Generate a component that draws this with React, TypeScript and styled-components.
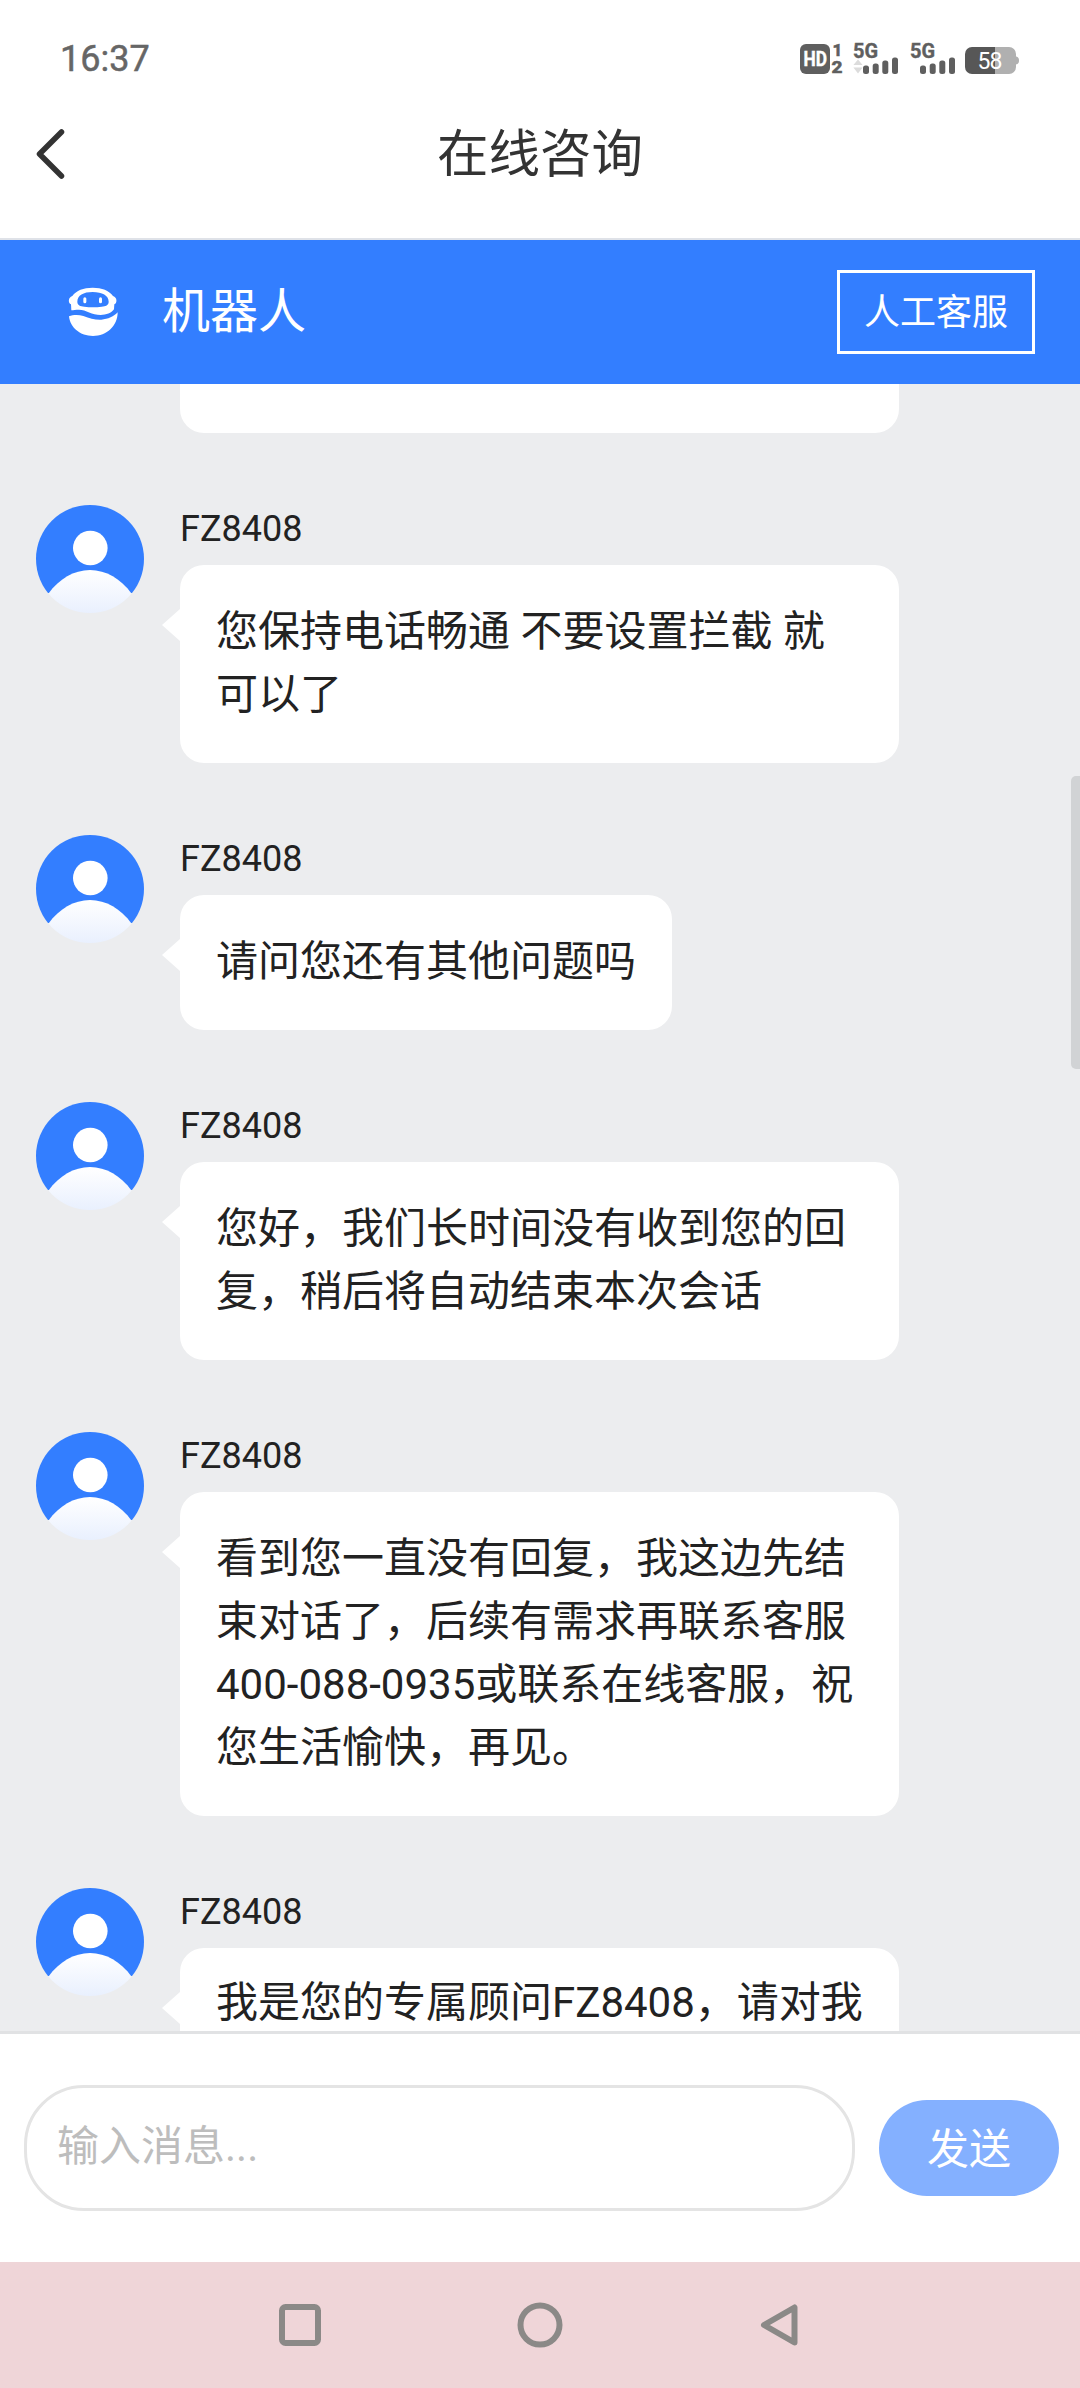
import React from "react";
import styled, { createGlobalStyle } from "styled-components";

const GlobalStyle = createGlobalStyle`
  *, *::before, *::after { box-sizing: border-box; }
  body {
    margin: 0;
    background: #fff;
    font-family: Roboto, "Noto Sans CJK SC", sans-serif;
    -webkit-font-smoothing: antialiased;
  }
`;

const Screen = styled.div`
  display: flex;
  flex-direction: column;
  width: 1080px;
  height: 2388px;
  overflow: hidden;
  background: #fff;
`;

const StatusBar = styled.div`
  display: flex;
  align-items: center;
  justify-content: space-between;
  height: 117px;
  padding: 0 59px 0 60px;
`;

const Clock = styled.span`
  color: #666;
  font-size: 36px;
  font-weight: 400;
  line-height: 42px;
  -webkit-text-stroke: 0.5px #666;
`;

const TitleBar = styled.header`
  display: grid;
  grid-template-columns: 120px 1fr 120px;
  align-items: center;
  height: 123px;
  border-bottom: 2px solid #dfe2e8;
`;

const BackButton = styled.button`
  display: flex;
  align-items: center;
  height: 72px;
  padding: 0 0 0 33px;
  margin-bottom: 48px;
  border: 0;
  background: none;
  align-self: end;
`;

const Title = styled.h1`
  margin: 0 0 47px;
  align-self: end;
  color: #333;
  font-size: 51.5px;
  font-weight: 400;
  line-height: 72px;
  text-align: center;
`;

const Banner = styled.div`
  display: flex;
  align-items: center;
  flex: none;
  height: 144px;
  padding: 0 45px 0 68px;
  background: #337eff;
  color: #fff;
`;

const BannerName = styled.span`
  flex: 1;
  margin-left: 44px;
  font-size: 48px;
  line-height: 72px;
`;

const AgentButton = styled.button`
  width: 198px;
  height: 84px;
  padding: 0 0 7px;
  border: 3px solid #fff;
  background: none;
  color: #fff;
  font-family: inherit;
  font-size: 36px;
`;

const Chat = styled.main`
  position: relative;
  display: flex;
  flex-direction: column;
  gap: 72px;
  flex: 1;
  min-height: 0;
  overflow: hidden;
  background: #ecedef;
`;

const ScrollThumb = styled.div`
  position: absolute;
  top: 392px;
  right: 0;
  width: 9px;
  height: 293px;
  border-radius: 5px 0 0 5px;
  background: #d1d3d5;
`;

const ClippedBubble = styled.div`
  flex: none;
  width: 719px;
  height: 49px;
  margin-left: 180px;
  border-radius: 0 0 24px 24px;
  background: #fff;
`;

const Row = styled.article`
  display: flex;
  flex: none;
  gap: 36px;
  padding-left: 36px;
`;

const Body = styled.div`
  display: flex;
  flex-direction: column;
  align-items: flex-start;
`;

const Sender = styled.div`
  height: 60px;
  color: #222;
  font-size: 36px;
  line-height: 48px;
`;

const Bubble = styled.div<{ $wide: boolean; $top: number }>`
  position: relative;
  width: ${(p) => (p.$wide ? "719px" : "auto")};
  padding: ${(p) => p.$top}px 36px 37px;
  border-radius: 24px;
  background: #fff;
  color: #222;
  font-size: 42px;
  line-height: 63px;
  white-space: pre;

  &::before {
    content: "";
    position: absolute;
    top: 44px;
    left: -18px;
    border: solid transparent;
    border-width: 16px 18px 16px 0;
    border-right-color: #fff;
  }
`;

const Composer = styled.footer`
  display: flex;
  align-items: center;
  flex: none;
  gap: 24px;
  height: 231px;
  padding: 0 21px 0 24px;
  border-top: 3px solid #e1e2e4;
`;

const MessageInput = styled.input`
  flex: 1;
  min-width: 0;
  height: 126px;
  padding: 0 30px 4px;
  border: 3px solid #e4e4e4;
  border-radius: 60px;
  background: #fff;
  font-family: inherit;
  font-size: 42px;
  outline: none;

  &::placeholder { color: #bdbdbd; opacity: 1; }
`;

const SendButton = styled.button`
  width: 180px;
  height: 96px;
  padding: 0 0 6px;
  border: 0;
  border-radius: 48px;
  background: #84b0ff;
  color: #fff;
  font-family: inherit;
  font-size: 42px;
`;

const SystemNav = styled.nav`
  display: flex;
  align-items: center;
  justify-content: center;
  flex: none;
  gap: 196px;
  height: 126px;
  background: #efd5d8;
`;

const StatusIcons = () => (
  <svg width="222" height="36" viewBox="800 41 222 36" fill="#5f5f5f" fontFamily="Roboto, sans-serif">
    <rect x="801" y="44" width="30" height="30" rx="6" />
    <text x="804.5" y="66" fontSize="19.5" fontWeight="700" fill="#fff" stroke="#fff" strokeWidth=".4" textLength="23.500" lengthAdjust="spacingAndGlyphs">HD</text>
    <text x="833.5" y="56" fontSize="17" fontWeight="800" stroke="#5f5f5f" strokeWidth=".5" textLength="9">1</text>
    <text x="832.5" y="73" fontSize="17" fontWeight="800" stroke="#5f5f5f" strokeWidth=".5" textLength="11" lengthAdjust="spacingAndGlyphs">2</text>
    {[0, 57].map((dx) => (
      <g key={dx} transform={`translate(${dx} 0)`}>
        <text x="854" y="58" fontSize="19.500" fontWeight="700" stroke="#5f5f5f" strokeWidth=".4" textLength="25" lengthAdjust="spacingAndGlyphs">5G</text>
        <rect x="864" y="65.5" width="6" height="8.5" rx="2.5" />
        <rect x="873.7" y="63.5" width="6" height="10.5" rx="2.5" />
        <rect x="883.3" y="60.5" width="6" height="13.5" rx="2.5" />
        <rect x="893" y="57.5" width="6" height="16.5" rx="2.5" />
      </g>
    ))}
    <path d="M859 59.500l4.600 5.500h-9.200zM859 73.500l4.600-6h-9.200z" fill="#dcdcdc" />
    <path d="M996 47h14a7 7 0 0 1 7 7v2.500c2.500.5 3 2 3 4s-.5 3.500-3 4v2.500a7 7 0 0 1-7 7h-14z" fill="#b0b0b0" />
    <path d="M996 47v27h-23a7 7 0 0 1-7-7v-13a7 7 0 0 1 7-7z" fill="#575757" />
    <text x="978.500" y="68.500" fontSize="23" fill="#fff" textLength="25">58</text>
  </svg>
);

const BackIcon = () => (
  <svg width="34" height="54" viewBox="0 0 34 54" fill="none" stroke="#333" strokeWidth="5.500" strokeLinecap="round" strokeLinejoin="round">
    <path d="M28.500 5 6.500 27l22 22" />
  </svg>
);

const RobotIcon = () => (
  <svg width="50" height="50" viewBox="204 172 150 150" fill="#fff">
    <path
      fillRule="evenodd"
      d="M214 242L213 224C204 220 204 203 217 199C229 182 250 174 278 174C306 174 327 182 339 199C352 203 352 220 343 224L342 239C334 250 319 256 302 256C276 256 258 240 237 240C227 240 220 241 214 242ZM232 216C232 197 250 187 278 187C307 187 326 198 326 216C326 226 317 230 305 231C288 233 270 233 253 231C241 230 232 226 232 216Z"
    />
    <rect x="250" y="203" width="9" height="18" rx="4.500" />
    <rect x="297" y="203" width="9" height="18" rx="4.500" />
    <path d="M207 260C219 255 235 254 250 259C269 266 286 271 304 270C324 269 342 260 353 248C353 289 320 319 279 319C241 319 210 294 207 260Z" />
  </svg>
);

const Avatar = () => (
  <svg width="108" height="108" viewBox="0 0 108 108">
    <defs>
      <clipPath id="avatar-clip"><circle cx="54" cy="54" r="54" /></clipPath>
      <linearGradient id="avatar-body" x1="0" y1="65" x2="0" y2="108" gradientUnits="userSpaceOnUse">
        <stop offset="0" stopColor="#fff" />
        <stop offset="1" stopColor="#e9f0fe" />
      </linearGradient>
    </defs>
    <g clipPath="url(#avatar-clip)">
      <path d="M0 0H108V88H0Z" fill="#337eff" />
      <path d="M0 108 12.500 88.500C23 74 38 65 54 65S85 74 95.500 88.500L108 108Z" fill="url(#avatar-body)" />
    </g>
    <circle cx="54.300" cy="43" r="17.300" fill="#fff" />
  </svg>
);

const SquareIcon = () => (
  <svg width="42" height="42" viewBox="0 0 42 42" fill="none" stroke="#8b8987" strokeWidth="6">
    <rect x="3" y="3" width="36" height="36" rx="3.500" />
  </svg>
);

const CircleIcon = () => (
  <svg width="46" height="46" viewBox="0 0 46 46" fill="none" stroke="#8b8987" strokeWidth="6">
    <circle cx="23" cy="23" r="19.500" />
  </svg>
);

const TriangleIcon = () => (
  <svg width="42" height="42" viewBox="0 0 42 42" fill="none" stroke="#8b8987" strokeWidth="6" strokeLinejoin="round">
    <path d="M35.500 3.500v35L5 21z" />
  </svg>
);

type Message = { lines: string[]; wide: boolean; top?: number };

const messages: Message[] = [
  { lines: ["您保持电话畅通 不要设置拦截 就", "可以了"], wide: true },
  { lines: ["请问您还有其他问题吗"], wide: false },
  { lines: ["您好，我们长时间没有收到您的回", "复，稍后将自动结束本次会话"], wide: true },
  { lines: ["看到您一直没有回复，我这边先结", "束对话了，后续有需求再联系客服", "400-088-0935或联系在线客服，祝", "您生活愉快，再见。"], wide: true },
  { lines: ["我是您的专属顾问FZ8408，请对我"], wide: true, top: 23 },
];

export default function App() {
  return (
    <>
      <GlobalStyle />
      <Screen>
        <StatusBar>
          <Clock>16:37</Clock>
          <StatusIcons />
        </StatusBar>
        <TitleBar>
          <BackButton aria-label="返回"><BackIcon /></BackButton>
          <Title>在线咨询</Title>
        </TitleBar>
        <Banner>
          <RobotIcon />
          <BannerName>机器人</BannerName>
          <AgentButton>人工客服</AgentButton>
        </Banner>
        <Chat>
          <ClippedBubble />
          {messages.map((message, index) => (
            <Row key={index}>
              <Avatar />
              <Body>
                <Sender>FZ8408</Sender>
                <Bubble $wide={message.wide} $top={message.top ?? 35}>
                  {message.lines.join("\n")}
                </Bubble>
              </Body>
            </Row>
          ))}
          <ScrollThumb />
        </Chat>
        <Composer>
          <MessageInput placeholder="输入消息..." />
          <SendButton>发送</SendButton>
        </Composer>
        <SystemNav>
          <SquareIcon />
          <CircleIcon />
          <TriangleIcon />
        </SystemNav>
      </Screen>
    </>
  );
}
